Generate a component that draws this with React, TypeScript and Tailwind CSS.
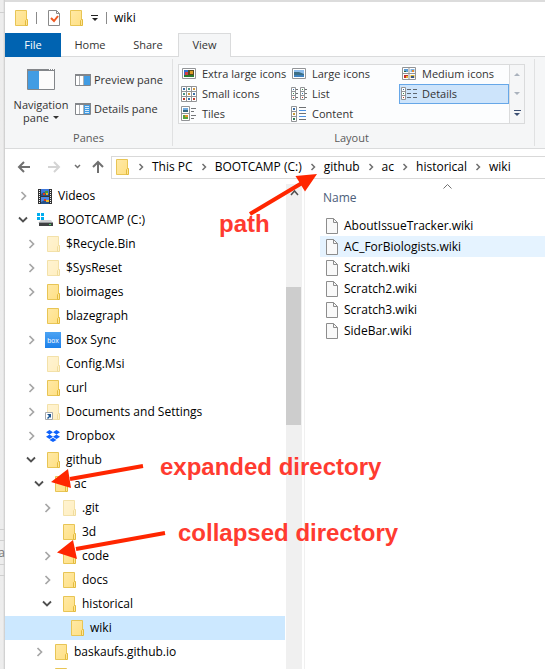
import React from "react";

type Kind = "folder" | "hidden" | "video" | "drive" | "box" | "link" | "dropbox";
type Node = { name: string; level: number; kind: Kind; state?: "open" | "closed"; selected?: boolean };

const nodes: Node[] = [
  { name: "Videos", level: 0, kind: "video", state: "closed" },
  { name: "BOOTCAMP (C:)", level: 0, kind: "drive", state: "open" },
  { name: "$Recycle.Bin", level: 1, kind: "hidden", state: "closed" },
  { name: "$SysReset", level: 1, kind: "hidden", state: "closed" },
  { name: "bioimages", level: 1, kind: "folder", state: "closed" },
  { name: "blazegraph", level: 1, kind: "folder" },
  { name: "Box Sync", level: 1, kind: "box", state: "closed" },
  { name: "Config.Msi", level: 1, kind: "hidden" },
  { name: "curl", level: 1, kind: "folder", state: "closed" },
  { name: "Documents and Settings", level: 1, kind: "link", state: "closed" },
  { name: "Dropbox", level: 1, kind: "dropbox", state: "closed" },
  { name: "github", level: 1, kind: "folder", state: "open" },
  { name: "ac", level: 2, kind: "folder", state: "open" },
  { name: ".git", level: 3, kind: "hidden", state: "closed" },
  { name: "3d", level: 3, kind: "folder" },
  { name: "code", level: 3, kind: "folder", state: "closed" },
  { name: "docs", level: 3, kind: "folder", state: "closed" },
  { name: "historical", level: 3, kind: "folder", state: "open" },
  { name: "wiki", level: 4, kind: "folder", selected: true },
  { name: "baskaufs.github.io", level: 2, kind: "folder", state: "closed" },
  { name: "", level: 2, kind: "folder" },
];

const indents = ["pl-2", "pl-4", "pl-6", "pl-8", "pl-10"];

const files = ["AboutIssueTracker.wiki", "AC_ForBiologists.wiki", "Scratch.wiki", "Scratch2.wiki", "Scratch3.wiki", "SideBar.wiki"];
const crumbs = ["This PC", "BOOTCAMP (C:)", "github", "ac", "historical", "wiki"];

function Folder({ faded = false }: { faded?: boolean }) {
  return (
    <svg width="16" height="16" viewBox="0 0 16 16" className={faded ? "shrink-0 opacity-50" : "shrink-0"}>
      <defs>
        <linearGradient id="folderFill" x1="0" y1="0" x2="1" y2="1">
          <stop offset="0" stopColor="#ffe9a6" />
          <stop offset="1" stopColor="#ffe084" />
        </linearGradient>
      </defs>
      <path d="M2.5 .5h11v15h-11z" fill="url(#folderFill)" stroke="#e8c555" />
      <path d="M12.5 15.5v-5l1-1h1v6z" fill="#ffe698" stroke="#e3bb3e" />
    </svg>
  );
}

function KindIcon({ kind }: { kind: Kind }) {
  if (kind === "box")
    return (
      <span className="flex size-4 shrink-0 items-center justify-center bg-linear-to-b from-[#4ba3f3] to-[#1a80ea] font-['Liberation_Sans',sans-serif] text-[7px] leading-none text-white">
        box
      </span>
    );
  if (kind === "video")
    return (
      <svg width="16" height="16" viewBox="0 0 16 16" className="shrink-0">
        <path d="M1 1h14v15H1z" fill="#333" />
        <path d="M4 1h8v7H4z" fill="#3f79dc" />
        <path d="M4 9h8v7H4z" fill="#4c88e4" />
        <path d="M4 6l3-2 5 2v2H4zM4 14l4-2 4 1v3H4z" fill="#24518a" />
        <path d="M8 3h3v3H8z" fill="#4a9a38" />
        <path d="M6 5h2v2H6zM7 11h2v2H7z" fill="#d93a22" />
        <path d="M9 5h2v2H9zM9 12h3v2H9z" fill="#e6b72c" />
        <path d="M2.5 2v14M13.5 2v14" stroke="#f4f4f4" strokeDasharray="1 1" />
      </svg>
    );
  if (kind === "drive")
    return (
      <svg width="16" height="16" viewBox="0 0 16 16" className="shrink-0">
        <path d="M0 1h3v3H0zM4 1h3v3H4zM0 5h3v3H0zM4 5h3v3H4z" fill="#00adef" />
        <path d="M4 8h10l2 3H1z" fill="#cfd1d3" />
        <path d="M2 10h14v4H2z" fill="#3f4143" />
        <path d="M2 10.500h14" stroke="#9b9da0" />
        <path d="M12 12h2v1h-2z" fill="#4fe06a" />
      </svg>
    );
  if (kind === "dropbox")
    return (
      <svg width="16" height="16" viewBox="0 0 16 16" className="shrink-0">
        <path d="M4.500 2l3.500 2.200-3.500 2.200L1 4.200zM11.500 2L15 4.200l-3.500 2.200L8 4.200zM4.500 6.600L8 8.800 4.500 11 1 8.800zM11.500 6.600L15 8.800 11.500 11 8 8.800zM8 9.700l3.500 2.200L8 14.100l-3.500-2.200z" fill="#0f62fb" />
      </svg>
    );
  if (kind === "link")
    return (
      <span className="relative size-4 shrink-0">
        <Folder faded />
        <svg width="8" height="8" viewBox="0 0 8 8" className="absolute bottom-0 left-0">
          <path d="M.5 .5h7v7h-7z" fill="#fff" stroke="#a5a8ab" />
          <path d="M2 2h4v4L5 5 3 7 2 6l2-2z" fill="#1c5692" />
        </svg>
      </span>
    );
  return <Folder faded={kind === "hidden"} />;
}

function Chevron({ state }: { state?: "open" | "closed" }) {
  return (
    <svg width="14" height="14" viewBox="0 0 14 14" fill="none" className="shrink-0">
      {state === "closed" && <path d="M5.500 3l4 4-4 4" stroke="#a6a6a6" strokeWidth="1.700" />}
      {state === "open" && <path d="M3 4.500l4 4 4-4" stroke="#505050" strokeWidth="1.800" />}
    </svg>
  );
}

function FileIcon() {
  return (
    <svg width="12" height="16" viewBox="0 0 12 16" fill="none" className="shrink-0">
      <path d="M.5 .5h7l4 4v11H.5z" fill="#f9f9f9" stroke="#8d8d8d" />
      <path d="M7.500 .5v4h4" stroke="#8d8d8d" />
    </svg>
  );
}

function PaneIcon({ details = false }: { details?: boolean }) {
  return (
    <svg width="16" height="12" viewBox="0 0 16 12" className="shrink-0">
      <path d="M.5 .5h15v11H.5z" fill="#fff" stroke="#83868a" />
      <path d="M0 0h16v2H0z" fill="#83868a" />
      <path d="M4.500 2v9M8.500 2v9" stroke="#b0b2b5" />
      <path d="M9 2h6v9H9z" fill="#429ce3" />
      {details && <path d="M10 3.500h4M10 5.500h4M10 7.500h4M10 9.500h4" stroke="#d5eafb" />}
    </svg>
  );
}

function ViewIcon({ name }: { name: string }) {
  const g = "#929497";
  return (
    <svg width="16" height="16" viewBox="0 0 16 16" fill="none" className="shrink-0">
      {name === "Extra large icons" && (
        <>
          <path d="M1.500 2.500h13v10h-13z" fill="#fff" stroke={g} />
          <path d="M3 4h10v7H3z" fill="#326fd0" />
          <path d="M7 4h6v6H7z" fill="#584a20" />
          <path d="M4 6h3v3H4z" fill="#d13d47" />
          <path d="M9 5h3v3H9z" fill="#d99b24" />
          <path d="M3 9h10v2H3z" fill="#2b792f" />
        </>
      )}
      {name === "Large icons" && (
        <>
          <path d="M1.500 2.500h13v10h-13z" fill="#fff" stroke={g} />
          <path d="M3 4h10v7H3z" fill="#8cbdec" />
          <path d="M3 6h5l5 2v2H3z" fill="#3d6f86" />
          <path d="M3 9h10v2H3z" fill="#3f82be" />
        </>
      )}
      {name === "Medium icons" && (
        <>
          <path d="M1.500 1.500h13v12h-13zM8 1.500v12M1.500 7.500h13" fill="#fff" stroke={g} />
          <path d="M3 3h4v3H3z" fill="#5b9bd5" /><path d="M3 5h2v1H3z" fill="#2b6b45" />
          <path d="M9.500 3h4v3h-4z" fill="#7fb0dc" /><path d="M11 4h2v2h-2z" fill="#e68b2c" />
          <path d="M3 9h4v3H3z" fill="#c52f2b" /><path d="M5 10h2v2H5z" fill="#e6b638" />
          <path d="M9.500 9h4v3h-4z" fill="#d9b333" /><path d="M10 10h3v2h-3z" fill="#38568a" />
        </>
      )}
      {name === "Small icons" && (
        <>
          <path d="M.5 .5h15v15H.5zM5.500 .5v15M10.500 .5v15M.5 5.500h15M.5 10.500h15" fill="#fff" stroke={g} />
          <path d="M2 2h2v2H2zM12 7h2v2h-2zM7 12h2v2H7z" fill="#3a6fa8" />
          <path d="M7 2h2v2H7zM2 7h2v2H2z" fill="#4c9486" />
          <path d="M12 2h2v2h-2zM7 7h2v2H7z" fill="#cf963c" />
          <path d="M2 12h2v2H2zM12 12h2v2h-2z" fill="#c0392b" />
        </>
      )}
      {name === "List" && (
        <>
          <path d="M.5 1.500h4v12h-4zM.5 5.500h4M.5 9.500h4M9.500 1.500h4v12h-4zM9.500 5.500h4M9.500 9.500h4" fill="#fff" stroke={g} />
          <path d="M5 3.500h2M5 7.500h2M5 11.500h2M14 3.500h2M14 7.500h2M14 11.500h2" stroke="#6d7073" />
          <path d="M2 3h1v1H2zM11 7h1v1h-1z" fill="#3a6fa8" />
          <path d="M2 7h1v1H2zM11 3h1v1h-1z" fill="#3e8c52" />
          <path d="M2 11h1v1H2zM11 11h1v1h-1z" fill="#c0392b" />
        </>
      )}
      {name === "Details" && (
        <>
          <path d="M.5 1.500h4v12h-4zM.5 5.500h4M.5 9.500h4" fill="#fff" stroke={g} />
          <path d="M6 3.500h4M12 3.500h4M6 7.500h4M12 7.500h4M6 11.500h4M12 11.500h4" stroke="#5f6770" />
          <path d="M2 3h1v1H2z" fill="#3a6fa8" />
          <path d="M2 7h1v1H2z" fill="#3e8c52" />
          <path d="M2 11h1v1H2z" fill="#c0392b" />
        </>
      )}
      {name === "Tiles" && (
        <>
          <path d="M.5 .5h8v14h-8zM.5 7.500h8" fill="#fff" stroke={g} />
          <path d="M2 2h5v4H2z" fill="#70a9dd" /><path d="M2 4h5v2H2z" fill="#36677d" />
          <path d="M2 9h5v4H2z" fill="#58a23c" /><path d="M4 9h3v2H4z" fill="#e58f2d" />
          <path d="M10 2.500h5M10 5.500h3M10 9.500h5M10 12.500h3" stroke="#74777a" />
        </>
      )}
      {name === "Content" && (
        <>
          <path d="M.5 .5h5v15h-5zM.5 5.500h5M.5 10.500h5" fill="#fff" stroke={g} />
          <path d="M8 1.500h7M8 7.500h7M8 13.500h7" stroke="#6d7073" />
          <path d="M8 4.500h7M8 10.500h7" stroke="#4a90e2" />
          <path d="M2 2h2v2H2z" fill="#3a6fa8" />
          <path d="M2 7h2v2H2z" fill="#c79b37" />
          <path d="M2 12h2v2H2z" fill="#2d7d54" />
        </>
      )}
    </svg>
  );
}

function GalleryItem({ name, active = false }: { name: string; active?: boolean }) {
  return (
    <button
      type="button"
      className={
        active
          ? "flex h-5 items-center gap-[5px] border border-[#66a7e8] bg-[#cde4fb] pl-px whitespace-nowrap"
          : "flex h-5 items-center gap-[5px] pl-[2px] whitespace-nowrap"
      }
    >
      <ViewIcon name={name} />
      {name}
    </button>
  );
}

function Ribbon() {
  return (
    <div className="flex h-[92px] shrink-0 border-b border-[#dadbdc] bg-[#f5f6f7] pt-[2px] pb-[2px] text-[11px] text-[#333]">
      <section className="flex w-[168px] shrink-0 flex-col border-r border-[#e0e1e2]">
        <div className="flex flex-1">
          <button type="button" className="flex w-[70px] flex-col items-center gap-2 pt-[10px] pl-[2px] leading-[13px]">
            <svg width="28" height="21" viewBox="0 0 28 21">
              <path d="M.5 .5h27v20H.5z" fill="#fcfcfc" stroke="#83868a" />
              <path d="M0 0h28v2H0z" fill="#83868a" />
              <path d="M1 2h11v18H1z" fill="#429ce3" />
              <path d="M22 .5h1M24 .5h1M26 .5h1" stroke="#fff" />
            </svg>
            <span className="flex flex-col items-center">
              <span>Navigation</span>
              <span className="flex items-center gap-1">
                pane
                <span className="border-x-[3px] border-t-[3px] border-x-transparent border-t-[#333]" />
              </span>
            </span>
          </button>
          <div className="flex flex-col gap-[9px] pt-[11px]">
            <button type="button" className="flex h-5 items-center gap-[3px] whitespace-nowrap">
              <PaneIcon />
              Preview pane
            </button>
            <button type="button" className="flex h-5 items-center gap-[3px] whitespace-nowrap">
              <PaneIcon details />
              Details pane
            </button>
          </div>
        </div>
        <h2 className="h-4 text-center leading-4 text-[#5a5a5a]">Panes</h2>
      </section>
      <section className="flex max-w-[362px] flex-1 flex-col border-r border-[#e0e1e2] pr-[9px] pl-[5px]">
        <div className="mt-[5px] flex h-[60px] border border-[#dadbdc] bg-[#fcfdfe]">
          <div className="grid flex-1 grid-cols-3 content-center">
            <GalleryItem name="Extra large icons" />
            <GalleryItem name="Large icons" />
            <GalleryItem name="Medium icons" />
            <GalleryItem name="Small icons" />
            <GalleryItem name="List" />
            <GalleryItem name="Details" active />
            <GalleryItem name="Tiles" />
            <GalleryItem name="Content" />
          </div>
          <div className="flex w-[15px] flex-col border-l border-[#dadbdc] bg-[#f5f6f7]">
            <button type="button" aria-label="Scroll up" className="flex flex-1 items-center justify-center">
              <span className="border-x-[3px] border-b-[3px] border-x-transparent border-b-[#aab2bd]" />
            </button>
            <button type="button" aria-label="Scroll down" className="flex flex-1 items-center justify-center">
              <span className="border-x-[3px] border-t-[3px] border-x-transparent border-t-[#aab2bd]" />
            </button>
            <button type="button" aria-label="More layouts" className="flex flex-1 flex-col items-center justify-center gap-[2px]">
              <span className="h-px w-[7px] bg-[#3b4f73]" />
              <span className="border-x-[3px] border-t-[3px] border-x-transparent border-t-[#3b4f73]" />
            </button>
          </div>
        </div>
        <h2 className="mt-auto h-4 text-center leading-4 text-[#5a5a5a]">Layout</h2>
      </section>
    </div>
  );
}

function CrumbChevron() {
  return (
    <svg width="22" height="10" viewBox="0 0 22 10" fill="none" className="shrink-0">
      <path d="M9.500 2l3 3-3 3" stroke="#707070" strokeWidth="1.500" />
    </svg>
  );
}

function AddressBar() {
  return (
    <nav className="flex h-[35px] shrink-0 items-center pt-[1px] pl-[12px]">
      <button type="button" aria-label="Back" className="w-[30px]">
        <svg width="14" height="14" viewBox="0 0 14 14" fill="none" stroke="#707070" strokeWidth="2">
          <path d="M13 7H2M7 2L2 7l5 5" />
        </svg>
      </button>
      <button type="button" aria-label="Forward" className="w-[27px]">
        <svg width="14" height="14" viewBox="0 0 14 14" fill="none" stroke="#d4d4d4" strokeWidth="2">
          <path d="M1 7h11M7 2l5 5-5 5" />
        </svg>
      </button>
      <button type="button" aria-label="Recent locations" className="w-[17px]">
        <svg width="7" height="10" viewBox="0 0 7 10" fill="none" stroke="#707070" strokeWidth="1.500">
          <path d="M1 3l2.500 2.500L6 3" />
        </svg>
      </button>
      <button type="button" aria-label="Up" className="w-[20px]">
        <svg width="14" height="14" viewBox="0 0 14 14" fill="none" stroke="#707070" strokeWidth="2">
          <path d="M7 13V2M2 7l5-5 5 5" />
        </svg>
      </button>
      <div className="flex h-[23px] flex-1 items-center overflow-hidden border-y border-l border-[#d9d9d9] pl-[2px]">
        <Folder />
        {crumbs.map((c) => (
          <React.Fragment key={c}>
            <CrumbChevron />
            <button type="button" className="whitespace-nowrap">{c}</button>
          </React.Fragment>
        ))}
      </div>
    </nav>
  );
}

function Annotations() {
  return (
    <div className="pointer-events-none absolute inset-0 overflow-hidden font-['Liberation_Sans',Arial,sans-serif] text-2xl leading-7 font-bold whitespace-nowrap text-[#ff3b30]">
      <svg width="545" height="669" viewBox="0 0 545 669" className="absolute top-0 left-0" fill="#ff2600" stroke="#ff2600">
        <path d="M250 214L302 183M143 466L70 479M165 533L76 549" strokeWidth="4" fill="none" />
        <path d="M317 174L295.500 176 305 191.500zM51 482L68 469 71 488zM57 552.500L73 540 77 559z" stroke="none" />
      </svg>
      <span className="absolute top-[210px] left-[219px]">path</span>
      <span className="absolute top-[453px] left-[160px]">expanded directory</span>
      <span className="absolute top-[519px] left-[178px]">collapsed directory</span>
    </div>
  );
}

export default function App() {
  return (
    <div className="relative flex h-screen overflow-hidden bg-[#dcdcdc] font-['Open_Sans','Noto_Sans',sans-serif] text-xs text-black">
      <div className="flex w-[5px] shrink-0 flex-col overflow-hidden bg-linear-to-r from-[#ededed] from-60% to-[#c9c9c9] text-[#777]">
        <div className="h-[13px] border-b border-[#cfcfcf]" />
        <div className="mt-auto h-3 border-y border-[#cfcfcf]" />
        <div className="flex h-6 items-center justify-end border-b border-[#cfcfcf]">a</div>
        <div className="mb-[93px] h-[11px] border-b border-[#cfcfcf]" />
      </div>
      <main className="mt-[2px] flex min-w-0 flex-1 flex-col bg-white">
        <header className="flex h-[31px] shrink-0 items-center pl-2">
          <Folder />
          <span className="mx-[7px] h-3 w-px bg-[#8a8a8a]" />
          <button type="button" aria-label="Properties" className="ml-[3px]">
            <svg width="14" height="16" viewBox="0 0 14 16" fill="none">
              <path d="M1.500 .5h8l3 3v12h-11z" fill="#fff" stroke="#8a8a8a" />
              <path d="M9.500 .5v3h3" stroke="#8a8a8a" />
              <path d="M4 8l3 3 4-5" stroke="#f05a22" strokeWidth="2" />
            </svg>
          </button>
          <button type="button" aria-label="New folder" className="ml-[7px]"><Folder /></button>
          <button type="button" aria-label="Customize toolbar" className="ml-[7px] flex flex-col items-center gap-[2px]">
            <span className="h-px w-[7px] bg-[#222]" />
            <span className="border-x-[3px] border-t-[3px] border-x-transparent border-t-[#222]" />
          </button>
          <span className="mr-[7px] ml-2 h-3 w-px bg-[#8a8a8a]" />
          <h1>wiki</h1>
        </header>
        <div className="flex h-6 shrink-0 text-[11px] text-[#333] shadow-[inset_0_-1px_#dadbdc]">
          <button type="button" className="w-14 bg-[#0063b1] text-white">File</button>
          <button type="button" className="w-[58px]">Home</button>
          <button type="button" className="mr-px w-[58px]">Share</button>
          <button type="button" className="w-[53px] border-x border-t border-[#dadbdc] bg-[#f5f6f7]">View</button>
        </div>
        <Ribbon />
        <AddressBar />
        <div className="flex min-h-0 flex-1">
          <ul className="w-[280px] shrink-0 overflow-hidden">
            {nodes.map((n, i) => (
              <li key={i}>
                <button type="button" className={(n.selected ? "bg-[#cce8ff] " : "") + "flex h-6 w-full items-center whitespace-nowrap " + indents[n.level]}>
                  <span className="ml-[3px] flex items-center">
                    <Chevron state={n.state} />
                    <span className="mr-[5px] ml-[7px] flex"><KindIcon kind={n.kind} /></span>
                    {n.name}
                  </span>
                </button>
              </li>
            ))}
          </ul>
          <div className="ml-px flex w-4 shrink-0 flex-col items-center bg-[#f0f0f0]">
            <svg width="9" height="14" viewBox="0 0 9 14" fill="none" className="shrink-0">
              <path d="M1 11l3.500-4L8 11" stroke="#505050" strokeWidth="1.500" />
            </svg>
            <div className="mt-[89px] mr-px h-[138px] w-[15px] shrink-0 bg-[#cdcdcd]" />
          </div>
          <div className="ml-[2px] min-w-0 flex-1 border-l border-[#f0f0f0] pl-[15px]">
            <table className="w-full border-collapse text-left">
              <thead>
                <tr>
                  <th className="relative h-[31px] pb-1 pl-[3px] font-normal text-[#4c607a]">
                    Name
                    <svg width="9" height="5" viewBox="0 0 9 5" fill="none" className="absolute top-0 left-[123px]">
                      <path d="M.5 4.500l4-4 4 4" stroke="#707070" />
                    </svg>
                  </th>
                </tr>
              </thead>
              <tbody>
                {files.map((f) => (
                  <tr key={f} className={f.startsWith("AC_") ? "bg-[#e5f3ff]" : ""}>
                    <td className="h-[21px] p-0 pl-[6px]">
                      <span className="flex items-center gap-[6px] whitespace-nowrap">
                        <FileIcon />
                        {f}
                      </span>
                    </td>
                  </tr>
                ))}
              </tbody>
            </table>
          </div>
        </div>
      </main>
      <Annotations />
    </div>
  );
}
